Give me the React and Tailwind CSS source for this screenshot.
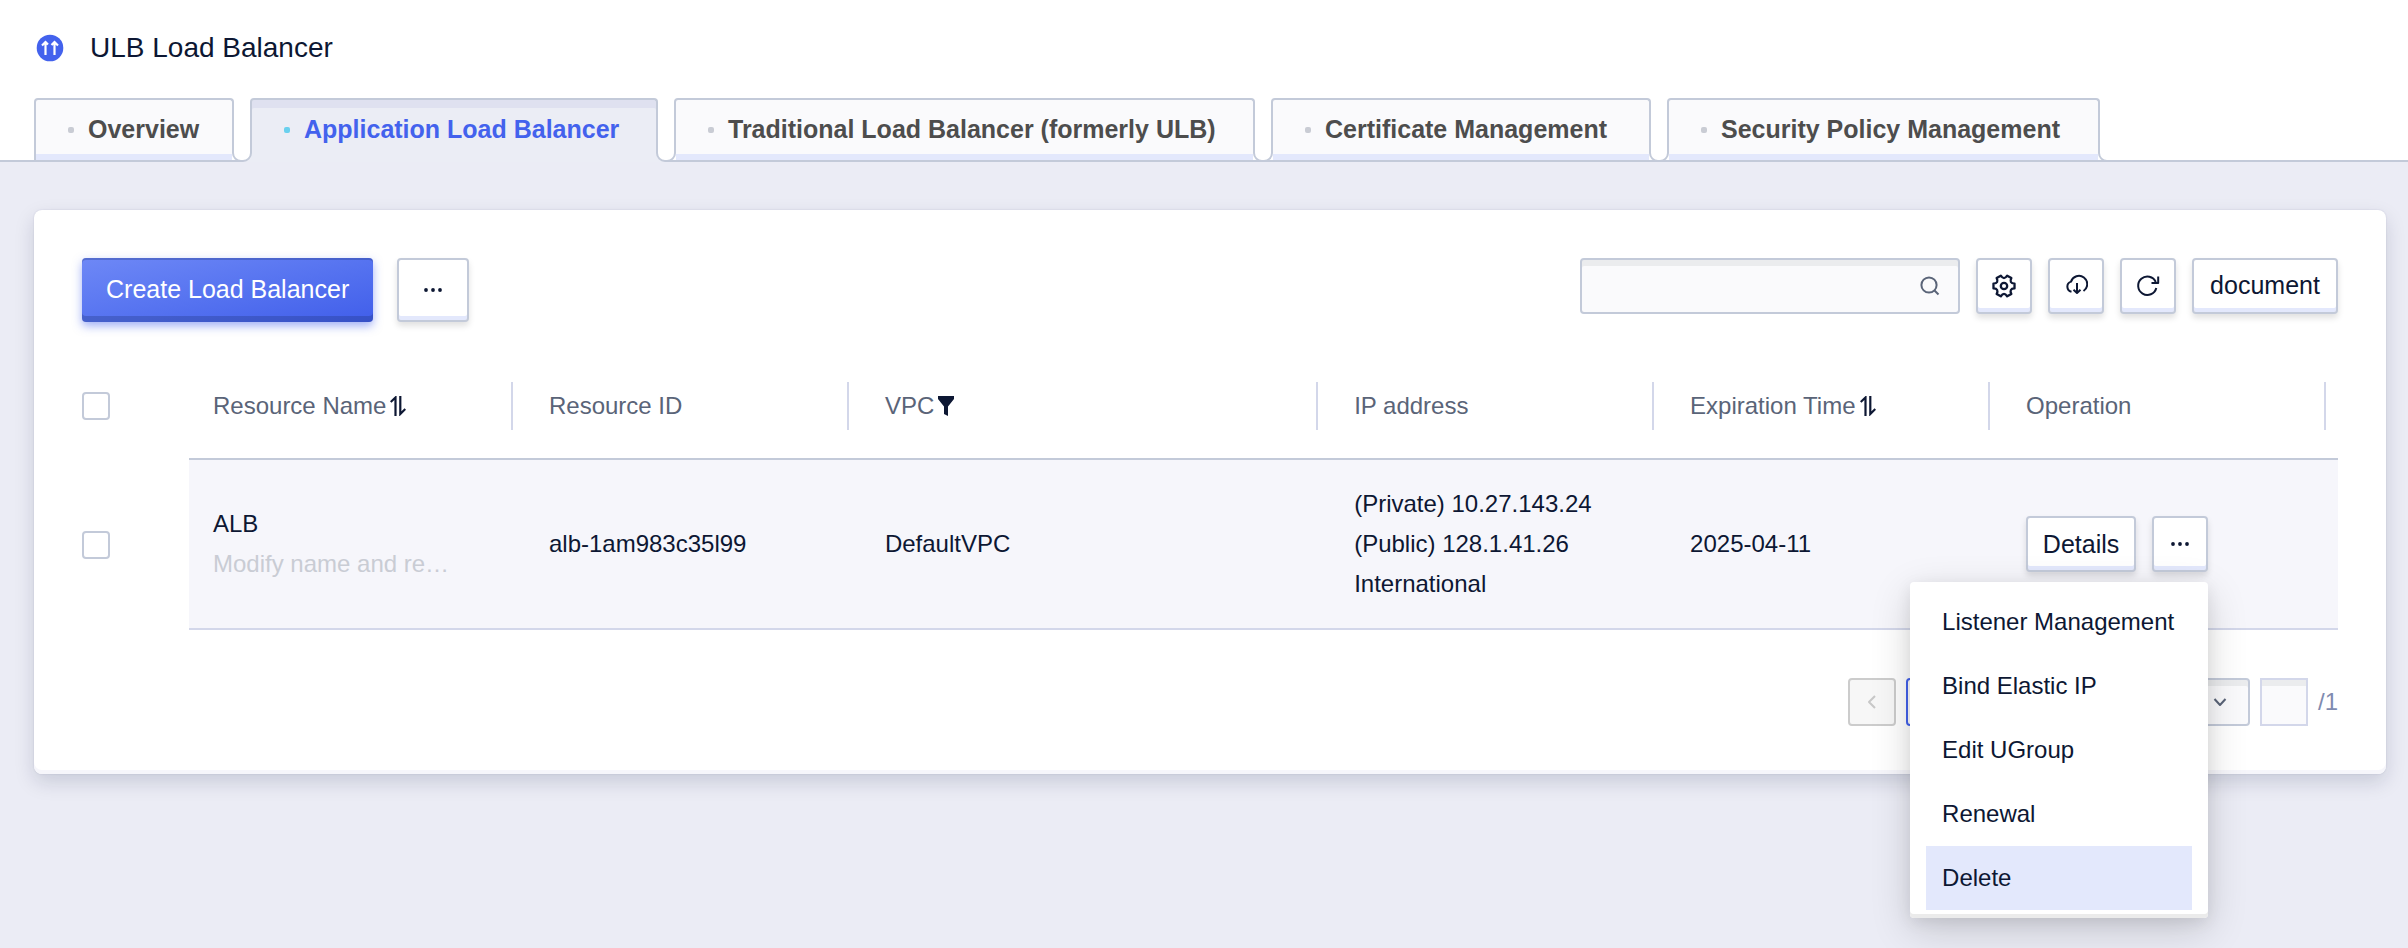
import { useState } from "react";

const TABS = [
  { label: "Overview", width: "min-w-[200px]" },
  { label: "Application Load Balancer", width: "min-w-[408px]" },
  { label: "Traditional Load Balancer (formerly ULB)", width: "min-w-[581px]" },
  { label: "Certificate Management", width: "min-w-[380px]" },
  { label: "Security Policy Management", width: "min-w-[433px]" },
];

const COLUMNS = [
  { label: "Resource Name", icon: "sort" },
  { label: "Resource ID" },
  { label: "VPC", icon: "filter" },
  { label: "IP address" },
  { label: "Expiration Time", icon: "sort" },
  { label: "Operation" },
];

const ROWS = [
  {
    name: "ALB",
    remark: "Modify name and re…",
    id: "alb-1am983c35l99",
    vpc: "DefaultVPC",
    ips: ["(Private) 10.27.143.24", "(Public) 128.1.41.26", "International"],
    expires: "2025-04-11",
  },
];

const MENU = ["Listener Management", "Bind Elastic IP", "Edit UGroup", "Renewal", "Delete"];

const BTN =
  "flex items-center justify-center rounded border-2 border-[#c3cad9] bg-white text-[25px] text-[#0d1733] shadow-[inset_0_-4px_0_0_#e3e8fc,0_4px_6px_0_rgba(0,0,0,0.12)]";

// six rounded teeth around the centre of a 24x24 box
const gearPoint = (deg, r) => {
  const a = (deg * Math.PI) / 180;
  return `${(12 + r * Math.cos(a)).toFixed(2)} ${(12 + r * Math.sin(a)).toFixed(2)}`;
};
const GEAR_PATH =
  `M${gearPoint(-13, 10.8)}` +
  [0, 60, 120, 180, 240, 300]
    .map((d) => `L${gearPoint(d + 13, 10.8)}Q${gearPoint(d + 30, 5.5)} ${gearPoint(d + 47, 10.8)}`)
    .join("") +
  "Z";

function LogoIcon() {
  return (
    <svg width="28" height="28" viewBox="0 0 28 28" aria-hidden="true">
      <circle cx="14" cy="14" r="13.3" fill="#4362ed" />
      <path d="M9.500 21V9M6 11.500 9.500 8l2.500 2.500M18.500 21V9M15.500 11 18.500 8l3.500 3.500" fill="none" stroke="#fff" strokeWidth="2.2" />
    </svg>
  );
}

function SortIcon() {
  return (
    <svg width="16" height="20" viewBox="0 0 16 20" aria-hidden="true">
      <path d="M.7 6 5.500 1.500V20M10.300 0V18L15.300 13" fill="none" stroke="#0d1733" strokeWidth="2.2" />
    </svg>
  );
}

function FilterIcon() {
  return (
    <svg width="16" height="20" viewBox="0 0 16 20" aria-hidden="true">
      <path d="M0 0h16v3l-6 7.500V20l-4-2v-7.500L0 3Z" fill="#0d1733" />
    </svg>
  );
}

function DotsIcon() {
  return (
    <svg width="18" height="4" viewBox="0 0 18 4" fill="#0d1733" aria-hidden="true">
      <circle cx="2" cy="2" r="1.9" />
      <circle cx="9" cy="2" r="1.9" />
      <circle cx="16" cy="2" r="1.9" />
    </svg>
  );
}

function LineIcon({ children }) {
  return (
    <svg width="24" height="24" viewBox="0 0 24 24" fill="none" stroke="currentColor" strokeWidth="2" strokeLinejoin="round" aria-hidden="true">
      {children}
    </svg>
  );
}

function Checkbox({ label }) {
  return (
    <input
      type="checkbox"
      aria-label={label}
      className="block size-7 appearance-none rounded border-2 border-[#c3cad9] bg-white checked:bg-[#4362ed]"
    />
  );
}

// curved foot that joins a tab to the line below it
function TabFoot({ active, className }) {
  return (
    <svg width="10" height="16" viewBox="0 0 10 16" aria-hidden="true" className={`absolute ${className}`}>
      <path d="M0 0H1V7A8 8 0 0 0 9 15V16H0Z" fill={active ? "#ebedf5" : "#fff"} />
      <path d={active ? "M1 0V7A8 8 0 0 0 9 15H10" : "M1 0V7A8 8 0 0 0 9 15H10M0 15H10"} fill="none" stroke="#c3cad9" strokeWidth="2" />
    </svg>
  );
}

function Tab({ label, width, first, active, onClick }) {
  return (
    <div className={`relative ${width} ${active ? "z-10 -mb-[2px]" : ""}`}>
      <button
        role="tab"
        aria-selected={active}
        onClick={onClick}
        className={`flex w-full items-center gap-[14px] rounded-t border-x-2 border-t-2 border-[#c3cad9] pl-8 text-[25px] font-bold whitespace-nowrap ${
          active
            ? "h-16 bg-[#ebedf5] pb-[2px] text-[#4362ed] shadow-[inset_0_8px_0_0_#dfe1f0]"
            : "h-[62px] bg-[#fafafc] text-[#4d4d4d] shadow-[inset_0_-6px_0_0_#e3e8fc]"
        }`}
      >
        <span className={`size-[6px] rounded-[2px] ${active ? "bg-[#6ad0ee]" : "bg-[#c9ccd4]"}`} />
        {label}
      </button>
      {!first && <TabFoot active={active} className={active ? "bottom-0 -left-2 -scale-x-100" : "-bottom-[2px] -left-2 -scale-x-100"} />}
      <TabFoot active={active} className={active ? "-right-2 bottom-0" : "-right-2 -bottom-[2px]"} />
    </div>
  );
}

function RowMenu() {
  return (
    <ul
      role="menu"
      className="absolute top-full right-0 z-20 mt-[10px] w-[298px] rounded bg-white px-4 py-2 shadow-[inset_0_-4px_0_0_#ebebeb,0_12px_40px_0_rgba(0,0,0,0.16),0_4px_16px_0_rgba(0,0,0,0.08)]"
    >
      {MENU.map((item) => (
        <li key={item} role="none">
          <button
            role="menuitem"
            className={`block h-16 w-full px-4 text-left whitespace-nowrap hover:bg-[#e3e8fc] ${item === "Delete" ? "bg-[#e3e8fc]" : ""}`}
          >
            {item}
          </button>
        </li>
      ))}
    </ul>
  );
}

export default function App() {
  const [tab, setTab] = useState(TABS[1].label);
  const [query, setQuery] = useState("");
  const [menuOpen, setMenuOpen] = useState(true);

  return (
    <div className="min-h-screen bg-[#ebecf5] font-['Liberation_Sans',Arial,sans-serif] text-2xl text-[#0d1733]">
      {/* Header */}
      <header className="bg-white pt-7">
        <div className="flex items-center gap-[26px] px-9">
          <LogoIcon />
          <h1 className="text-[28px] leading-10">ULB Load Balancer</h1>
        </div>
        <div role="tablist" className="mt-[30px] flex gap-4 border-b-2 border-[#c3cad9] px-[34px]">
          {TABS.map((t, i) => (
            <Tab key={t.label} {...t} first={i === 0} active={t.label === tab} onClick={() => setTab(t.label)} />
          ))}
        </div>
      </header>

      <main className="pt-12 pr-[22px] pb-12 pl-[34px]">
        <section className="rounded-lg bg-white p-12 shadow-[inset_0_-4px_0_0_#f6f6fb,0_0_2px_0_rgba(0,20,80,0.12),0_8px_20px_0_rgba(0,20,60,0.15)]">
          {/* Toolbar */}
          <div className="flex items-start justify-between">
            <div className="flex gap-6">
              <button className="h-16 rounded bg-linear-to-br from-[#6e88f6] to-[#415eea] px-6 text-[25px] text-white shadow-[inset_0_2px_0_0_rgba(30,50,120,0.3),inset_0_-6px_0_0_rgba(30,50,120,0.3),0_4px_10px_0_rgba(67,98,237,0.5)]">
                Create Load Balancer
              </button>
              <button aria-label="More actions" className={`${BTN} h-16 w-[72px]`}>
                <DotsIcon />
              </button>
            </div>
            <div className="flex gap-4">
              <label className="flex h-14 w-[380px] items-center rounded border-2 border-[#c3cad9] bg-[#fafafc] px-4 text-[#5a6478] shadow-[inset_0_6px_0_0_#ebecee]">
                <input
                  aria-label="Search"
                  value={query}
                  onChange={(e) => setQuery(e.target.value)}
                  className="min-w-0 flex-1 bg-transparent outline-none"
                />
                <LineIcon>
                  <circle cx="11" cy="11" r="7.6" />
                  <path d="m16.500 16.500 4 4" />
                </LineIcon>
              </label>
              <button aria-label="Settings" className={`${BTN} size-14`}>
                <LineIcon>
                  <path d={GEAR_PATH} strokeWidth="2.3" />
                  <circle cx="12" cy="12" r="3.2" strokeWidth="2.3" />
                </LineIcon>
              </button>
              <button aria-label="Download" className={`${BTN} size-14`}>
                <LineIcon>
                  <path d="M7.500 17.800A5.300 5.300 0 0 1 7 7.600 8.300 8.300 0 1 1 19.500 17M13 9v10M9.500 15.700 13 19l3.500-3.300" />
                </LineIcon>
              </button>
              <button aria-label="Refresh" className={`${BTN} size-14`}>
                <LineIcon>
                  <path d="M20.300 14A9.200 9.200 0 1 1 19.800 8M22.200 2.500V9H15.500" />
                </LineIcon>
              </button>
              <button className={`${BTN} h-14 w-[146px]`}>document</button>
            </div>
          </div>

          {/* Resources */}
          <table className="mt-8 w-full table-fixed border-collapse text-left">
            <colgroup>
              <col className="w-[107px]" />
              <col />
              <col />
              <col className="w-[20.8%]" />
              <col />
              <col />
              <col />
            </colgroup>
            <thead>
              <tr className="h-[105px]">
                <th className="border-b-2 border-transparent">
                  <Checkbox label="Select all" />
                </th>
                {COLUMNS.map((col) => (
                  <th key={col.label} className="border-b-2 border-[#c3cad9] pr-3 pl-6 font-normal text-[#5a6478]">
                    <div className="flex h-12 items-center gap-1 border-r-2 border-[#d3d7ea]">
                      {col.label}
                      {col.icon === "sort" && <SortIcon />}
                      {col.icon === "filter" && <FilterIcon />}
                    </div>
                  </th>
                ))}
              </tr>
            </thead>
            <tbody>
              {ROWS.map((row) => (
                <tr key={row.id} className="h-[170px] leading-10 [&>td+td]:border-b-2 [&>td+td]:border-[#d3d7ea] [&>td+td]:bg-[#f6f6fb] [&>td+td]:pl-6">
                  <td>
                    <Checkbox label={`Select ${row.name}`} />
                  </td>
                  <td>
                    <p>{row.name}</p>
                    <p className="whitespace-nowrap text-[#c9ccd4]">{row.remark}</p>
                  </td>
                  <td>{row.id}</td>
                  <td>{row.vpc}</td>
                  <td>
                    {row.ips.map((ip) => (
                      <p key={ip}>{ip}</p>
                    ))}
                  </td>
                  <td>{row.expires}</td>
                  <td>
                    <div className="flex gap-4">
                      <button className={`${BTN} h-14 w-[110px]`}>Details</button>
                      <div className="relative">
                        <button
                          aria-label="More"
                          aria-expanded={menuOpen}
                          onClick={() => setMenuOpen(!menuOpen)}
                          className={`${BTN} size-14`}
                        >
                          <DotsIcon />
                        </button>
                        {menuOpen && <RowMenu />}
                      </div>
                    </div>
                  </td>
                </tr>
              ))}
            </tbody>
          </table>

          {/* Pagination */}
          <div className="mt-12 flex items-center justify-end gap-[10px] text-[#7f8bb0]">
            <button disabled aria-label="Previous page" className="flex size-12 items-center justify-center rounded border-2 border-[#cccccc] bg-[#f7f7f7] text-[#c8c8c8]">
              <LineIcon>
                <path d="m15 6-6 6 6 6" />
              </LineIcon>
            </button>
            <button aria-current="page" className="size-12 rounded border-2 border-[#4362ed] bg-white text-[#4362ed]">1</button>
            <button disabled aria-label="Next page" className="flex size-12 items-center justify-center rounded border-2 border-[#cccccc] bg-[#f7f7f7] text-[#c8c8c8]">
              <LineIcon>
                <path d="m9 6 6 6-6 6" />
              </LineIcon>
            </button>
            <div className="relative">
              <select
                aria-label="Rows per page"
                className="block h-12 w-[228px] appearance-none rounded border-2 border-[#c3cad9] bg-[#fafafc] px-3 text-[#0d1733] shadow-[inset_0_6px_0_0_#ebecee]"
              >
                <option>10 / page</option>
                <option>20 / page</option>
              </select>
              <span className="pointer-events-none absolute inset-y-0 right-[18px] flex items-center text-[#5a6478]">
                <LineIcon>
                  <path d="m6.500 9 5.500 6 5.500-6" />
                </LineIcon>
              </span>
            </div>
            <input aria-label="Go to page" className="size-12 border-2 border-[#d3d7ea] bg-[#fafafc] text-center shadow-[inset_0_6px_0_0_#ebecee]" />
            <span>/1</span>
          </div>
        </section>
      </main>
    </div>
  );
}
